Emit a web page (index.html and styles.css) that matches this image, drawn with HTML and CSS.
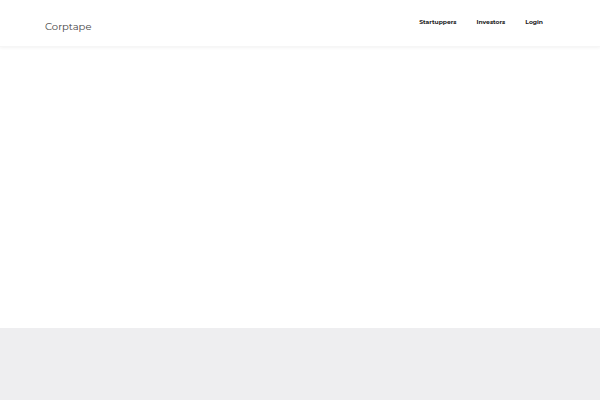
FILE: index.html
```html
<!DOCTYPE html>
<html>
<head>
<meta charset="utf-8">
<link rel="stylesheet" href="styles.css">
</head>
<body>
<header class="topbar">
  <div class="brand">Corptape</div>
  <nav class="nav">
    <a class="nav-link" href="#">Startuppers</a>
    <a class="nav-link" href="#">Investors</a>
    <a class="nav-link" href="#">Login</a>
  </nav>
</header>
<main class="content"></main>
<footer class="footer"></footer>
</body>
</html>
```
FILE: styles.css
```css
html, body {
  margin: 0;
  padding: 0;
  background: #ffffff;
  font-family: "Montserrat", "Open Sans", "Liberation Sans", sans-serif;
}
.topbar {
  height: 46px;
  display: flex;
  align-items: center;
  justify-content: space-between;
  padding: 0 57px 0 45px;
  box-shadow: 0 1px 3px rgba(0,0,0,0.05);
  border-bottom: 1px solid #f6f6f6;
  position: relative;
}
.brand {
  font-size: 10px;
  font-weight: 400;
  color: #444;
  margin-top: 6px;
}
.nav {
  display: flex;
  gap: 20px;
  margin-top: -3px;
}
.nav-link {
  font-size: 6px;
  font-weight: 700;
  color: #222;
  text-decoration: none;
}
.content {
  height: 281px;
}
.footer {
  height: 72px;
  background: #eeeef0;
}
```
